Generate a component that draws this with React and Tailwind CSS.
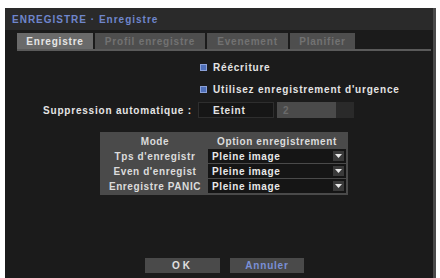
import React from "react";

const Arrow = () => (
  <div className="w-[11px] h-[10px] bg-[#3a3a3a] flex items-center justify-center">
    <svg width="7" height="4" viewBox="0 0 7 4"><path d="M0 0H7L3.5 4Z" fill="#e8e8e8" /></svg>
  </div>
);

const Check = () => (
  <div className="w-[7px] h-[7px] bg-[#4f6fb8] border border-[#8aa0d8] shrink-0" />
);

export default function App() {
  const rows = [
    ["Tps d'enregistr", "Pleine image"],
    ["Even d'enregist", "Pleine image"],
    ["Enregistre PANIC", "Pleine image"],
  ];
  return (
    <div className="w-[440px] h-[278px] bg-white overflow-hidden" style={{ fontFamily: '"Liberation Sans", Arial, sans-serif' }}>
      <div className="ml-[5px] mt-[8px] w-[431px] h-[270px] bg-[#1b1b1b] border-r-[3px] border-[#4a4a4a] flex flex-col text-[10px] font-bold tracking-[0.8px]">
        <div className="h-[22px] bg-[#2a2a2a] flex items-center pl-[7px] text-[#6f86cc] tracking-[1px]">
          ENREGISTRE · Enregistre
        </div>
        <div className="pl-[12px] pt-[3px] pr-[2px]">
          <div className="flex gap-[2px] border-b-[2px] border-[#5a5a5a]">
            <div className="w-[76px] h-[16px] bg-[#6a6a6a] text-[#e6e6e6] flex items-center justify-center">Enregistre</div>
            <div className="w-[110px] h-[16px] bg-[#4e4e4e] text-[#727272] flex items-center justify-center">Profil enregistre</div>
            <div className="w-[81px] h-[16px] bg-[#4e4e4e] text-[#727272] flex items-center justify-center">Evenement</div>
            <div className="w-[65px] h-[16px] bg-[#4e4e4e] text-[#727272] flex items-center justify-center">Planifier</div>
          </div>
        </div>
        <div className="flex flex-col pl-[195px] pt-[10px] gap-[10px] text-[#e4e4e4]">
          <div className="flex items-center gap-[6px] h-[12px]"><Check /><span>Réécriture</span></div>
          <div className="flex items-center gap-[6px] h-[12px]"><Check /><span>Utilisez enregistrement d'urgence</span></div>
        </div>
        <div className="flex items-center pl-[38px] mt-[7px] h-[16px] text-[#e4e4e4]">
          <span className="w-[155px] whitespace-nowrap">Suppression automatique :</span>
          <div className="w-[76px] h-[16px] bg-[#161616] border border-[#2e2e2e] flex items-center pl-[14px]">Eteint</div>
          <div className="ml-[3px] w-[59px] h-[16px] bg-[#4a4a4a] text-[#6a6a6a] flex items-center pl-[6px]">2</div>
          <div className="w-[18px] h-[16px] bg-[#2a2a2a]" />
        </div>
        <div className="ml-[95px] mt-[14px] w-[248px] bg-[#4a4a4a] p-[2px] flex flex-col gap-[1px] text-[#dcdcdc] tracking-[0.6px]">
          <div className="flex h-[14px]">
            <div className="w-[106px] flex items-center justify-center">Mode</div>
            <div className="flex-1 flex items-center justify-center">Option enregistrement</div>
          </div>
          {rows.map(([a, b]) => (
            <div key={a} className="flex h-[14px]">
              <div className="w-[106px] flex items-center justify-center whitespace-nowrap">{a}</div>
              <div className="flex-1 bg-[#151515] flex items-center justify-between pl-[4px] pr-[2px] text-[#e8e8e8]">
                <span>{b}</span>
                <Arrow />
              </div>
            </div>
          ))}
        </div>
        <div className="flex-1" />
        <div className="flex gap-[10px] pl-[140px] pb-[5px]">
          <div className="w-[75px] h-[15px] bg-[#4a4a4a] text-[#e0e0e0] flex items-center justify-center tracking-[3px]">OK</div>
          <div className="w-[74px] h-[15px] bg-[#4a4a4a] text-[#7a90d6] flex items-center justify-center">Annuler</div>
        </div>
      </div>
    </div>
  );
}
